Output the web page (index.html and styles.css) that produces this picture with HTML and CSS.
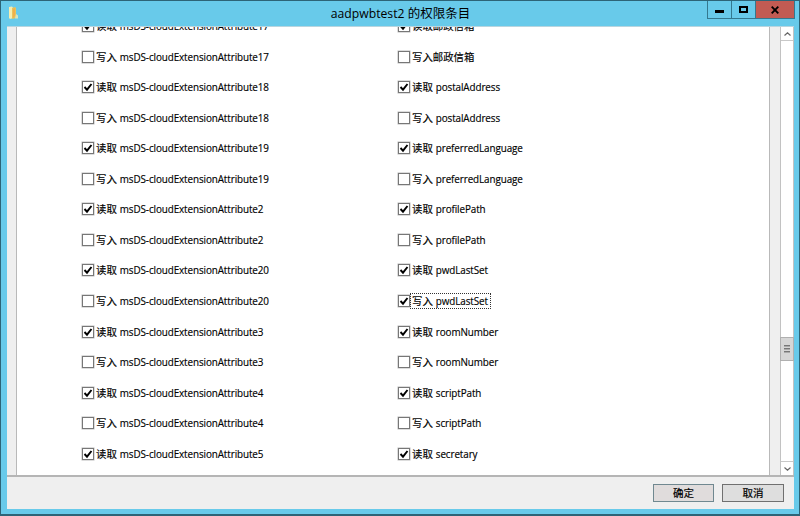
FILE: index.html
```html
<!DOCTYPE html>
<html lang="zh-CN">
<head>
<meta charset="utf-8">
<title>aadpwbtest2 的权限条目</title>
<link rel="stylesheet" href="styles.css">
</head>
<body>
<div class="window">
  <header class="titlebar">
    <svg class="folder" width="12" height="14" viewBox="0 0 12 14"><path d="M2 1l3-.5 1 1V12l-3 1-1-1z" fill="#f7eeb0"/><path d="M5 2l3-1 1 1V12l-4 1z" fill="#e9c45a"/><path d="M6 3l2-1v8l-2 2z" fill="#f0b04c"/><path d="M9 8l2 1.500v3L8 12.500z" fill="#d5e5c0"/></svg>
    <h1 class="title">aadpwbtest2 <span class="han">的权限条目</span></h1>
    <div class="controls">
      <span class="control minimize"><svg width="9" height="3"><path d="M0 0h9v3H0z"/></svg></span>
      <span class="control maximize"><svg width="9" height="7"><path d="M1 1h7v5H1z" fill="none" stroke="#000" stroke-width="2"/></svg></span>
      <span class="control close"><svg width="8" height="8" viewBox="0 0 8 8"><path d="M.7.7l6.600 6.600M7.300.7L.7 7.300" stroke="#000" stroke-width="1.900"/></svg></span>
    </div>
  </header>
  <main class="client">
    <div class="scroller">
      <div class="gutter"></div>
      <div class="panel">
        <div class="permissions" id="permissions"></div>
      </div>
      <div class="gutter right"></div>
      <div class="scrollbar">
        <span class="arrow up"><svg width="7" height="4" viewBox="0 0 7 4"><path d="M.5 3.500l3-2.700 3 2.700" fill="none" stroke="#666" stroke-width="1.200"/></svg></span>
        <span class="thumb"><i></i><i></i><i></i></span>
        <span class="arrow down"><svg width="7" height="4" viewBox="0 0 7 4"><path d="M.5.5l3 2.700 3-2.700" fill="none" stroke="#666" stroke-width="1.200"/></svg></span>
      </div>
    </div>
    <footer class="footer">
      <button class="button default">确定</button>
      <button class="button">取消</button>
    </footer>
  </main>
</div>
<script src="script.js"></script>
</body>
</html>
```
FILE: styles.css
```css
* { box-sizing: border-box; }
body { margin: 0; font-family: "Open Sans", "Noto Sans CJK SC", sans-serif; color: #000; }
svg { display: block; }
.window {
  width: 800px; height: 516px; display: flex; flex-direction: column;
  background: #68caea; border: 1px solid #2d6477; border-bottom-width: 2px; 
  padding: 0 5px 5px 6px; overflow: hidden;
}
.titlebar { height: 25px; flex: none; display: grid; grid-template-columns: 1fr auto 1fr; align-items: start; }
.folder { margin-top: 5px; }
.title { margin: 0; font-size: 12.200px; line-height: 25px; font-weight: 400; white-space: nowrap; }
.title .han { font-size: 12.500px; }
.controls { justify-self: end; display: flex; height: 18px; border: 1px solid #34788f; border-top: 0; margin-right: -1px; }
.control { width: 24px; display: flex; align-items: center; justify-content: center; border-right: 1px solid #34788f; }
.control.minimize svg { margin-top: 4px; }
.control.close { width: 38px; background: #c25b53; border-right: 0; }
.client { flex: 1; display: flex; flex-direction: column; background: #efefef; min-height: 0; }
.scroller { height: 451px; flex: none; display: flex; border-top: 1px solid #b8d5df; border-bottom: 2px solid #b5b5b5; }
.gutter { width: 10px; border-right: 1px solid #b9b9b9; }
.gutter.right { width: 11px; border-right: 0; border-left: 1px solid #b9b9b9; }
.panel { flex: 1; background: #fff; overflow: hidden; padding-left: 65px; }
.permissions {
  display: grid; grid-template-columns: 316px 1fr; grid-auto-rows: 30.570px;
  margin-top: -16.300px; align-items: center;
}
.item { display: flex; align-items: center; font-size: 9.900px; line-height: 14px; white-space: nowrap; }
.box { width: 12px; height: 12px; border: 1px solid #777; background: #fff; flex: none; box-shadow: 0 0 0 .5px #bbb; }
.label { padding: 0 2px 0 1px; border: 1px dotted transparent; display: flex; gap: 3px; -webkit-text-stroke: .15px #000; }
.label .han { font-size: 10.400px; }
.label .name { letter-spacing: -.1px; }
.focused .label { border-color: #333; }
.scrollbar { width: 14px; background: #fff; border: solid #c2c2c2; border-width: 0 1px; display: flex; flex-direction: column; align-items: center; }
.arrow { width: 12px; height: 14px; display: flex; align-items: center; justify-content: center; flex: none; }
.arrow.up { border-bottom: 1px solid #c8c8c8; }
.arrow.down { border-top: 1px solid #c8c8c8; margin-top: auto; }
.thumb { width: 14px; height: 24px; margin-top: 296px; background: #d6d6d6; border: 1px solid #b0b0b0; display: flex; flex-direction: column; align-items: center; justify-content: center; gap: 1px; }
.thumb i { width: 6px; height: 2px; background: #777; border-bottom: 1px solid #aaa; }
.footer { flex: 1; display: flex; justify-content: flex-end; gap: 8px; padding: 7px 10px 0 0; }
.button { width: 62px; height: 18px; padding: 0; border: 1px solid #707070; background: #dedede; font: 10.500px/16px "Noto Sans CJK SC", sans-serif; color: #000; -webkit-text-stroke: .2px #000; }
.button.default { width: 61px; border-color: #708890; background: #e0dcdc; }
```
FILE: script.js
```js
const attributes = [
  ["17", "邮政信箱"],
  ["18", "postalAddress"],
  ["19", "preferredLanguage"],
  ["2", "profilePath"],
  ["20", "pwdLastSet"],
  ["3", "roomNumber"],
  ["4", "scriptPath"],
  ["5", "secretary"]
];
const list = document.getElementById("permissions");
const tick = '<svg width="10" height="10" viewBox="0 0 10 10"><path d="M1.500 5l2.500 2.700L8.500 2" fill="none" stroke="#000" stroke-width="1.900"/></svg>';

function addItem(action, name, checked, focused) {
  const item = document.createElement("div");
  item.className = focused ? "item focused" : "item";
  const label = /^[a-z]/i.test(name)
    ? `<span class="han">${action}</span><span class="name">${name}</span>`
    : `<span class="han">${action}${name}</span>`;
  item.innerHTML = `<span class="box">${checked ? tick : ""}</span><span class="label">${label}</span>`;
  list.append(item);
}

for (const [number, name] of attributes) {
  for (const action of ["读取", "写入"]) {
    const reading = action === "读取";
    const focused = !reading && name === "pwdLastSet";
    if (number === "5" && !reading) continue;
    addItem(action, "msDS-cloudExtensionAttribute" + number, reading, false);
    addItem(action, name, reading || focused, focused);
  }
}
```
